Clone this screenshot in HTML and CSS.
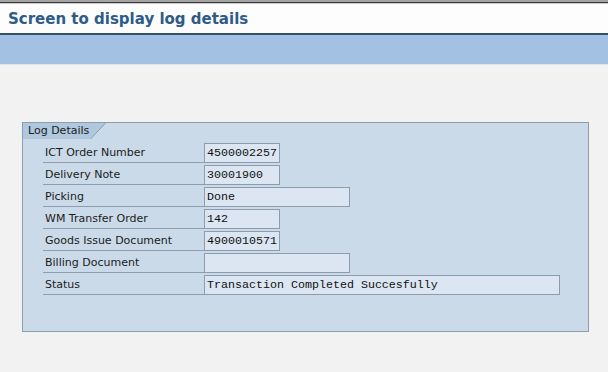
FILE: index.html
```html
<!DOCTYPE html>
<html lang="en">
  <head>
    <meta charset="UTF-8" />
    <title>Screen to display log details</title>
    <link rel="stylesheet" href="styles.css">
  </head>
  <body>
    <!-- Title bar -->
    <div class="titlebar">
      <h1 class="title">Screen to display log details</h1>
    </div>
    <div class="toolbar"></div>

    <!-- Group box -->
    <div class="content">
      <div class="groupbox">
        <div class="tab">
          <span class="tab-label">Log Details</span>
          <svg class="tab-slant" width="16" height="16" viewBox="0 0 16 16">
            <polygon points="0,0 15,0 0,16" fill="#afc8dd" />
            <line x1="15.5" y1="0" x2="0.5" y2="16" stroke="#8797a8" stroke-width="1" />
          </svg>
        </div>

        <div class="rows">
          <div class="row">
            <span class="label">ICT Order Number</span>
            <span class="field short">4500002257</span>
          </div>
          <div class="row">
            <span class="label">Delivery Note</span>
            <span class="field short">30001900</span>
          </div>
          <div class="row">
            <span class="label">Picking</span>
            <span class="field medium">Done</span>
          </div>
          <div class="row">
            <span class="label">WM Transfer Order</span>
            <span class="field short">142</span>
          </div>
          <div class="row">
            <span class="label">Goods Issue Document</span>
            <span class="field short">4900010571</span>
          </div>
          <div class="row">
            <span class="label">Billing Document</span>
            <span class="field medium"></span>
          </div>
          <div class="row">
            <span class="label">Status</span>
            <span class="field long">Transaction Completed Succesfully</span>
          </div>
        </div>
      </div>
    </div>
  </body>
</html>
```

FILE: styles.css
```css
/* ============ Base ============ */
html,
body {
  margin: 0;
  height: 100%;
  background: #f2f2f2;
  font-family: "DejaVu Sans", Verdana, sans-serif;
}

/* ============ Title ============ */
.titlebar {
  height: 31px;
  background: #fdfdfd;
  border-top: 2px solid #a3a3a3;
  box-shadow: inset 0 1px 0 #3c3c3c, inset 0 2px 0 #c8c8c8;
  border-bottom: 2px solid #34506c;
  display: flex;
  align-items: center;
  padding-left: 8px;
}

.title {
  margin: 0;
  padding-top: 3px;
  font-size: 15px;
  font-weight: bold;
  color: #2e5b88;
}

.toolbar {
  height: 29px;
  background: #a3c2e3;
  border-bottom: 1px solid #dfe6ee;
}

/* ============ Group box ============ */
.content {
  padding: 57px 0 0 22px;
}

.groupbox {
  width: 565px;
  height: 208px;
  border: 1px solid #8e9cab;
  background: #cbdae8;
}

.tab {
  display: flex;
  height: 16px;
}

.tab-label {
  background: #afc8dd;
  padding: 0 0 0 5px;
  width: 62px;
  font-family: "DejaVu Sans", Tahoma, sans-serif;
  font-size: 11px;
  line-height: 16px;
  color: #1b1b1b;
}

/* ============ Rows ============ */
.rows {
  display: flex;
  flex-direction: column;
  gap: 2px;
  padding: 4px 0 0 20px;
}

.row {
  display: flex;
  height: 20px;
}

.label {
  width: 159px;
  padding-left: 2px;
  border-bottom: 1px solid #8e9cab;
  font-family: "DejaVu Sans", Tahoma, sans-serif;
  font-size: 11px;
  line-height: 20px;
  color: #1b1b1b;
}

.field {
  box-sizing: border-box;
  height: 20px;
  border: 1px solid #8d9baa;
  background: #dbe6f2;
  padding-left: 2px;
  font-family: "Liberation Mono", "Courier New", monospace;
  font-size: 11.67px;
  line-height: 18px;
  color: #111;
  white-space: pre;
}

.short {
  width: 76px;
}

.medium {
  width: 146px;
}

.long {
  width: 356px;
}
```
